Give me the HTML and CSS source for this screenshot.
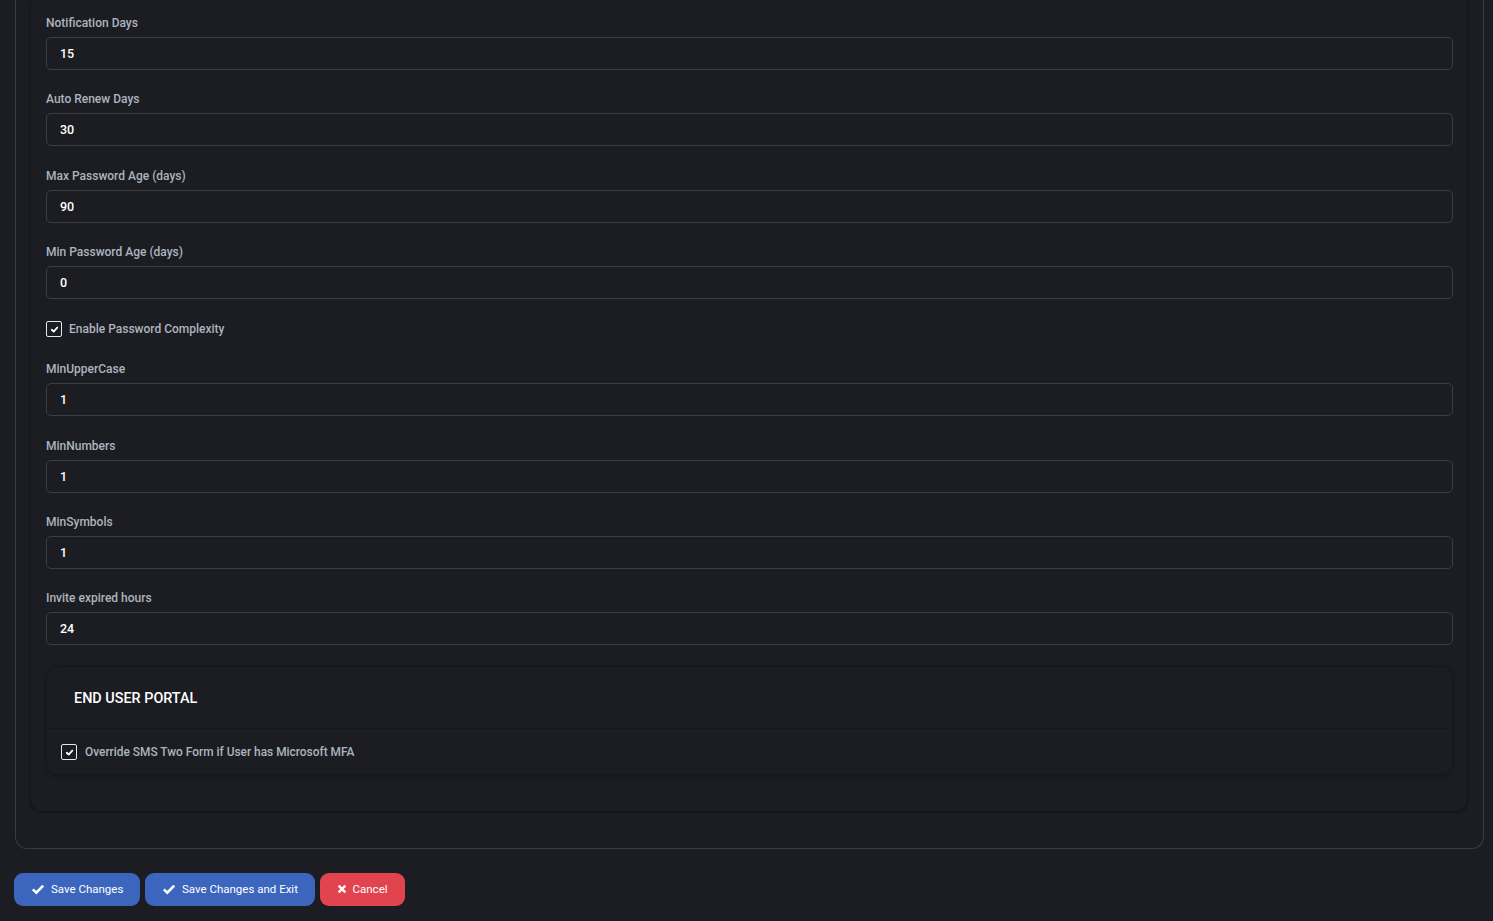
FILE: index.html
```html
<!DOCTYPE html>
<html>
<head>
<meta charset="utf-8">
<link rel="stylesheet" href="styles.css">
</head>
<body>
<div class="outer-card">
  <div class="inner-card">
    <div class="field">
      <label class="field-label">Notification Days</label>
      <div class="input">15</div>
    </div>
    <div class="field">
      <label class="field-label">Auto Renew Days</label>
      <div class="input">30</div>
    </div>
    <div class="field">
      <label class="field-label">Max Password Age (days)</label>
      <div class="input">90</div>
    </div>
    <div class="field">
      <label class="field-label">Min Password Age (days)</label>
      <div class="input">0</div>
    </div>
    <div class="check-row">
      <span class="checkbox"><svg viewBox="0 0 16 16" width="16" height="16"><path d="M4.6 8.3 L7 10.5 L11.4 5.6" fill="none" stroke="#fff" stroke-width="2.2" stroke-linecap="round" stroke-linejoin="round"/></svg></span>
      <span class="check-label">Enable Password Complexity</span>
    </div>
    <div class="field">
      <label class="field-label">MinUpperCase</label>
      <div class="input">1</div>
    </div>
    <div class="field">
      <label class="field-label">MinNumbers</label>
      <div class="input">1</div>
    </div>
    <div class="field">
      <label class="field-label">MinSymbols</label>
      <div class="input">1</div>
    </div>
    <div class="field">
      <label class="field-label">Invite expired hours</label>
      <div class="input">24</div>
    </div>
    <div class="portal-card">
      <div class="portal-head">END USER PORTAL</div>
      <div class="portal-body">
        <div class="check-row portal-check">
          <span class="checkbox"><svg viewBox="0 0 16 16" width="16" height="16"><path d="M4.6 8.3 L7 10.5 L11.4 5.6" fill="none" stroke="#fff" stroke-width="2.2" stroke-linecap="round" stroke-linejoin="round"/></svg></span>
          <span class="check-label portal-label">Override SMS Two Form if User has Microsoft MFA</span>
        </div>
      </div>
    </div>
  </div>
</div>
<div class="actions">
  <button class="btn btn-primary"><svg class="btn-icon" viewBox="0 0 14 14" width="14" height="14"><path d="M1.8 7.4 L5.3 10.6 L12.2 3.6" fill="none" stroke="#fff" stroke-width="2.6" stroke-linejoin="miter"/></svg>Save Changes</button>
  <button class="btn btn-primary"><svg class="btn-icon" viewBox="0 0 14 14" width="14" height="14"><path d="M1.8 7.4 L5.3 10.6 L12.2 3.6" fill="none" stroke="#fff" stroke-width="2.6" stroke-linejoin="miter"/></svg>Save Changes and Exit</button>
  <button class="btn btn-danger"><svg class="btn-icon small" viewBox="0 0 12 12" width="10" height="10"><path d="M2 2 L10 10 M10 2 L2 10" fill="none" stroke="#fff" stroke-width="2.8"/></svg>Cancel</button>
</div>
</body>
</html>
```
FILE: styles.css
```css
* { box-sizing: border-box; }
html, body { background: #1c1d22; }
body {
  margin: 0;
  padding: 0 9px 0 15px;
  font-family: Roboto, "Liberation Sans", Arial, sans-serif;
  color: #fff;
}
.outer-card {
  border: 1px solid #3b3c42;
  border-top: none;
  border-radius: 0 0 12px 12px;
  padding: 0 15px 36px 14px;
}
.inner-card {
  border: 1px solid #141518;
  border-top: none;
  border-radius: 0 0 12px 12px;
  padding: 14px 14px 36px 15px;
  box-shadow: 0 1px 3px rgba(0,0,0,0.25);
}
.field { margin-bottom: 20.33px; }
.field-label {
  display: block;
  font-size: 12px;
  font-weight: 500;
  line-height: 18px;
  color: #adb4bf;
  margin-bottom: 5px;
}
.input {
  height: 33px;
  border: 1px solid #3d3e44;
  border-radius: 5px;
  background: #1c1d22;
  padding: 0 13px;
  font-size: 12.5px;
  font-weight: 500;
  line-height: 31px;
  color: #fff;
}
.check-row {
  display: flex;
  align-items: center;
  gap: 7px;
  height: 20px;
  margin-bottom: 21px;
}
.checkbox {
  width: 16px;
  height: 16px;
  border: 1.5px solid #e6e8ee;
  border-radius: 2px;
  display: flex;
  align-items: center;
  justify-content: center;
  flex-shrink: 0;
}
.checkbox svg { width: 13px; height: 13px; }
.check-label {
  font-size: 12px;
  font-weight: 500;
  color: #adb4bf;
}
.portal-label { font-size: 11.9px; }
.portal-card {
  margin-top: 2px;
  border: 1px solid #17181c;
  border-radius: 12px;
  box-shadow: 0 1px 4px rgba(0,0,0,0.3);
}
.portal-head {
  height: 62px;
  padding: 3px 27px 0;
  display: flex;
  align-items: center;
  font-size: 14.4px;
  font-weight: 500;
  color: #fff;
  border-bottom: 1px solid #17181c;
}
.portal-body {
  height: 45px;
  padding: 2px 14px 0;
  display: flex;
  align-items: center;
}
.portal-check { margin: 0; gap: 8px; }
.actions {
  display: flex;
  gap: 4.6px;
  margin: 24px 0 0 -1px;
}
.btn {
  height: 33px;
  border: none;
  border-radius: 9px;
  display: flex;
  align-items: center;
  padding: 0 17px 0 17px;
  font-family: Roboto, "Liberation Sans", Arial, sans-serif;
  font-size: 11.5px;
  font-weight: 400;
  color: #fff;
  cursor: pointer;
}
.btn-icon { margin-right: 6px; }
.btn-icon.small { margin-right: 6px; }
.btn-primary { background: #3c66bd; }
.btn-danger { background: #e1444f; }
```
